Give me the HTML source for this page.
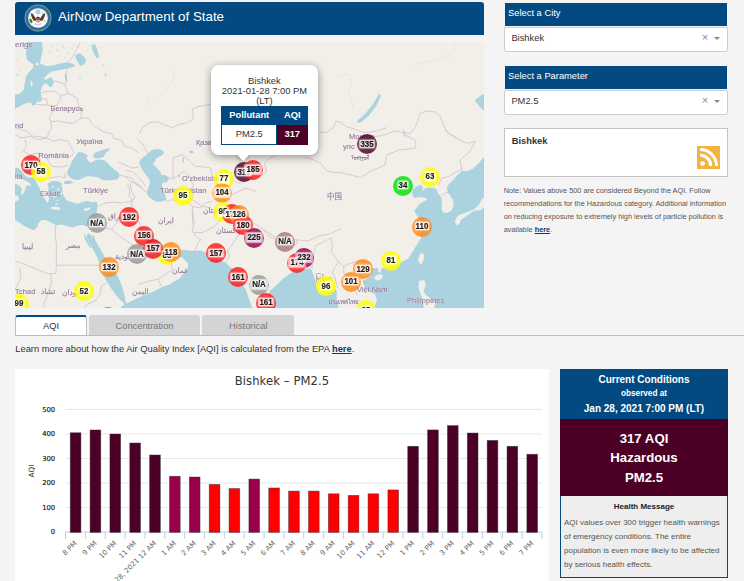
<!DOCTYPE html><html><head><meta charset="utf-8"><title>AirNow Department of State</title><style>

*{box-sizing:border-box}
html,body{margin:0;padding:0}
body{width:744px;height:581px;overflow:hidden;background:#f4f4f4;font-family:"Liberation Sans",Arial,sans-serif;position:relative;color:#333}
.abs{position:absolute}
.hdr{left:15px;top:2px;width:469px;height:33px;background:#034a82;border-radius:3px 3px 0 0;color:#fff;font-size:13.33px;line-height:33px}
.hdr span{position:absolute;left:43.1px;top:-1.9px;white-space:nowrap}
.seal{position:absolute;left:8.85px;top:1.85px}
.map{left:15px;top:42px;width:469px;height:266px;overflow:hidden;background:#f2efe9}
.mapsvg{position:absolute;left:0;top:0}
.mk{position:absolute;width:20px;height:20px;border-radius:50%;opacity:.82}
.mk i{position:absolute;left:1.6px;top:1.6px;right:1.6px;bottom:1.6px;border-radius:50%;}
.ml{position:absolute;width:20px;height:20px;opacity:.92}
.ml b{position:absolute;left:-10px;right:-10px;top:4.6px;text-align:center;font-size:9.2px;line-height:10px;color:#111;font-weight:bold;transform:scaleX(.86)}
.ml b u{text-decoration:none;display:inline-block;height:8.2px;line-height:8.6px;margin-top:1px;padding:0 .9px;background:rgba(255,255,255,.85);box-shadow:0 0 1.5px .5px rgba(255,255,255,.75);border-radius:1px;-webkit-text-stroke:.18px #111;
 text-shadow:0 0 1px #fff,0 0 1.5px #fff,0 0 2px #fff}
.pop{left:195.7px;top:23.3px;width:107.4px;height:89.5px;background:#fff;border-radius:8px;box-shadow:0 2px 9px rgba(0,0,0,.4);text-align:center;font-size:9.33px;line-height:10.25px;color:#333}
.tip{left:221.4px;top:112.7px;width:13.6px;height:13.6px;overflow:hidden}
.tip i{position:absolute;left:1.6px;top:-5.6px;width:10.4px;height:10.4px;background:#fff;transform:rotate(45deg);box-shadow:0 1px 5px rgba(0,0,0,.3)}
.pt{position:absolute;left:10.3px;top:40.7px;width:87px;height:38px;border-collapse:collapse;font-size:9.33px;line-height:10px}
.pt th{background:#034a82;color:#fff;font-weight:bold;height:18.4px;padding:0 0 1.6px;border:1px solid #034a82}
.pt td{height:19.2px;padding:0;border:1px solid #034a82;background:#fff}
.pt td.v{background:#4c0026;color:#fff;font-weight:bold;border-color:#4c0026}
.ph{left:504.5px;width:222.8px;height:23px;background:#034a82;color:#fff;font-size:9.33px;line-height:21.8px;padding-left:3.6px;white-space:nowrap}
.sel{left:504.4px;width:223.4px;height:24.5px;background:#fff;border:1px solid #ccc;border-radius:3px;font-size:9.33px;line-height:20.8px;padding-left:6px;color:#333}
.sel .x{position:absolute;right:18.6px;top:-1.4px;color:#7f8a99;font-size:11px}
.sel .a{position:absolute;right:7px;top:8.8px;width:0;height:0;border-left:3.3px solid transparent;border-right:3.3px solid transparent;border-top:3.3px solid #888}
.rss{left:504.2px;top:128px;width:223.5px;height:48.5px;background:#fff;border:1px solid #c4c4c4;font-weight:bold;font-size:9.33px;color:#333}
.rss span{position:absolute;left:6.5px;top:7px}
.note{left:503.7px;top:184px;width:232px;font-size:7.33px;line-height:13px;color:#555;white-space:nowrap}
.note b{color:#123a6a;text-decoration:underline}
.tabline{left:15px;top:335px;width:729px;height:1px;background:#bdbdbd}
.tab{top:315px;height:20.5px;font-size:9.33px;line-height:23.4px;text-align:center;color:#777;background:#d4d4d4;border-radius:3px 3px 0 0}
.tab.on{background:#fff;color:#333;border:1px solid #bdbdbd;border-top:2px solid #034a82;border-bottom:0;line-height:19.6px}
.learn{left:15.3px;top:342.5px;font-size:9.33px;line-height:12px;white-space:nowrap;color:#333}
.learn b{color:#123a6a;text-decoration:underline}
.cc{left:560px;top:369px;width:168px;text-align:center;color:#fff;font-weight:bold}
.cc1{background:#034a82;height:49.6px;font-size:10px;line-height:14.4px;padding-top:3.9px}
.cc1 small{font-size:8.2px;display:block;line-height:14.4px}
.cc2{background:#4c0026;height:77px;font-size:13.2px;line-height:19.2px;padding-top:10.5px}
.cc3{background:#eee;border:1px solid #034a82;border-top:0;height:82.2px;color:#333;font-size:8px;line-height:14px;text-align:left;padding:0 3px;font-weight:normal;white-space:nowrap}
.cc3 h6{margin:0;text-align:center;font-size:8px;line-height:13px;padding-top:4.6px;padding-bottom:3px;color:#222}
.cc3 p{margin:0;color:#555}

</style></head><body>
<div class="abs hdr"><svg class="seal" width="28" height="28" viewBox="0 0 28 28">
<circle cx="14" cy="14" r="13.4" fill="#a9b45e"/>
<circle cx="14" cy="14" r="12.7" fill="#2b6cb3"/>
<circle cx="14" cy="14" r="10.1" fill="#9fb8a8"/>
<circle cx="14" cy="14" r="9.6" fill="#fbfbfb"/>
<circle cx="14" cy="7.8" r="2.6" fill="#a8cfe6"/>
<path d="M6.6 9.3 L8.9 9.9 L11.1 13.4 L12.8 15.6 L11.4 17 L9.3 16.3 L7.8 13.5 Z" fill="#5e3a14"/>
<path d="M21.4 9.3 L19.1 9.9 L16.9 13.4 L15.2 15.6 L16.6 17 L18.7 16.3 L20.2 13.5 Z" fill="#5e3a14"/>
<path d="M8.6 9.4 L9.2 7.9 L9.9 9.8 Z M19.4 9.4 L18.8 7.9 L18.1 9.8 Z" fill="#c9b23a"/>
<ellipse cx="14" cy="14.1" rx="1.8" ry="1.3" fill="#3a2a18"/>
<path d="M12.2 14.4 h3.7 v3 q-1.85 2.6 -3.7 0 Z" fill="#f08a8a"/>
<path d="M12.2 14.4 h3.7 v1.4 h-3.7 Z" fill="#2f5fa8"/>
<ellipse cx="6.9" cy="16.9" rx="1.3" ry="2.4" transform="rotate(-25 6.9 16.9)" fill="#3f7f3a"/>
<path d="M19.6 15.6 l2.6 1.6 l-.5 .8 l-2.7 -1.4 Z" fill="#b5b5b5"/>
<path d="M11 19 q3 2 6 0 l.6 1.6 q-3.6 1.8 -7.2 0 Z" fill="#cfcfcf"/>
</svg><span>AirNow Department of State</span></div>
<div class="abs map">
<svg class="mapsvg" width="469" height="266" viewBox="0 0 469 266">
<rect width="469" height="266" fill="#f2efe9"/>
<g filter="url(#bl)">
<polygon points="0,125.5 3,125.8 6,128.5 9,132.5 14,136.5 19,139.5 19,150 0,150" fill="#aad3df" />
<polygon points="11.88,0 26.88,0 27.75,6.5 26.88,12.75 25.62,17.75 25,21.5 31.25,24 37.5,23.38 45,21.5 52.5,20.25 57.5,21.5 60.62,24 55,25.88 50,27.12 42.5,28.38 36.25,29.62 33.75,31.5 30,35.25 31.25,36.5 36.25,35.25 38.75,39 37.5,44 35,45.25 32.5,42.12 29.38,41.5 26.88,45.25 25.62,49 26.25,54 26.88,59 21.25,60.25 20.62,62.75 17.5,63.38 15.62,60.25 10,61.5 5,64 0,67.12 0,52.75 5,51.5 8.75,47.75 10,40.25 10.62,35.25 13.75,30.25 17.5,26.5 18.75,22.75 15,20.25 11.88,17.75 11,11.5 11.88,5.25" fill="#aad3df" />
<polygon points="60.62,12.75 65,10.88 69.38,15.25 71.25,19 68.75,22.75 65,24 63.12,20.25 60.62,16.5" fill="#aad3df" />
<polygon points="76.88,2.75 80,2.12 82.5,9 84.38,15.25 81.88,16.5 78.75,11.5 76.88,6.5" fill="#aad3df" />
<polygon points="49.75,32.12 51.25,31.75 52.25,39 50.62,39.25" fill="#aad3df" />
<polygon points="63.75,109.88 67.5,110.5 71.25,112.38 73.12,113.62 71.25,116.12 73.12,118.62 75.62,121.12 80,118.62 83.75,117.38 88.75,118 92.5,121.12 96.25,124.88 100,128 103.75,131.12 104.38,134.88 101.88,137.38 97.5,138 92.5,138.62 87.5,138 83.75,135.5 80,134.88 76.25,134.25 72.5,134.25 68.75,135.5 65,137.38 61.25,138 56.88,136.75 53.75,134.25 51.88,131.12 53.12,127.38 55.62,123 56.88,119.25 60,114.88 61.88,111.75" fill="#aad3df" />
<polygon points="78.12,112.38 81.25,109.88 86.25,108.62 91.25,106.75 95,106.12 93.75,108.62 90,111.75 88.75,114.88 85,116.12 81.25,116.75 78.75,115.5" fill="#aad3df" />
<polygon points="48.75,139.88 52.5,138.62 56.88,139.25 58.12,141.12 53.75,142 49.38,142" fill="#aad3df" />
<polygon points="0,135.5 17.5,135.5 20,138 22,141.75 24.25,145.5 25.88,149.88 28.5,154.88 30.62,158.62 32.75,161.12 34,158 33.5,153 32.75,149.25 33.75,145.5 32.25,142.75 34,140.75 35.62,139.75 38.12,139 42.5,139.25 45.25,140.25 46.88,141.75 46.5,144.25 47.75,146.75 47.25,149.88 48.5,153 50.25,156.75 53.75,159.25 58.12,160.5 62.5,161.75 67.5,159.88 72.5,159 77.5,160.5 81.25,159.5 82.75,163 81.88,169.25 80.25,175.5 77.5,180.5 75,183.75 72.5,184.5 67.5,183 62.5,183.75 57.5,185.5 52.5,184.25 46.25,182.38 41.25,183.25 36.25,180.75 31.25,178.25 26.88,178 23.5,181.12 22,185.5 18.75,188.25 13.75,186.25 7.5,183 3.75,180 0,178" fill="#aad3df" />
<polygon points="71.25,196 75,202.25 78.75,208.5 81.88,214.75 84.38,221 87.5,232.25 91.25,238.5 95,244.75 99.38,251 104.38,257.25 108.75,261 110,263.5 111.25,262.25 110.62,259.75 110,256 108.75,249.75 106.25,242.25 102.5,233.5 97.5,226 92.5,218.5 89.38,214.75 86.25,208.5 81.88,201 78.12,196 76.25,193.5 73.75,191 72.25,192.25" fill="#aad3df" />
<polygon points="77.75,193 79,196.75 78.5,200.5 77.25,198" fill="#aad3df" />
<polygon points="69,191.12 70.62,194.25 73.75,200.5 76.25,205.5 75,206.12 71.88,201.12 69.38,195.5" fill="#aad3df" />
<polygon points="136.88,108 141.25,107 146.25,107.38 149,109.88 147.5,113 143.75,114.88 140.62,116.75 140,119.88 137.5,121.12 140,124.25 143.12,127.38 145.62,129.88 146.25,133 150,133 153.12,135.5 153.75,138.62 151.25,140.5 148.12,140.5 146.88,143 147.5,146.75 149.38,150.5 150.62,154.25 151.25,158 147.5,159.25 142.5,159.88 138.12,158 134.38,155.5 131.88,151.75 132.5,147.38 134.38,143 135,139.25 133.12,135.5 130,131.75 127.5,128 125.62,124.25 124,120.5 125.62,117.38 128.75,114.88 132.5,111.75" fill="#aad3df" />
<polygon points="174,109.25 176.88,108.62 179,110.25 176.88,111.5 174.38,110.75" fill="#aad3df" />
<polygon points="167.75,115.5 169,115.25 168.75,120.5 167.25,120.75" fill="#aad3df" />
<polygon points="163.12,133.62 164.75,133 165.25,135.25 163.5,135.75" fill="#aad3df" />
<polygon points="110,262 115,259.8 121,256.8 130,252.8 139.9,248.9 146.8,244.9 154.8,242.4 157.8,239.9 163.8,236.9 166.7,233.9 170.7,229 173.2,224 172.7,221 169.5,217.5 165.5,214.5 164,209.5 166,207.8 172,208.3 179,209 185.7,208.5 190.7,210.5 193,214.5 203.75,218.6 208,219.5 210.7,220.7 214,224 217.3,226.5 222,234 226.5,241 230.7,247.3 234,257.3 237.3,266 105,266" fill="#aad3df" />
<polygon points="123.75,185.25 130,186.5 136.25,194 143.75,200.25 152.5,205.25 162.5,206.5 168,209.5 166.25,215.25 160,216.5 153.75,220.25 146.25,219 141.25,211.5 136.25,206.5 130,197.75 125,191.5" fill="#aad3df" />
<polygon points="323.75,266 322.5,259.75 321.5,254.75 321.9,249.75 320,246.6 317.5,248.5 313.75,251 308.75,252.9 303.75,251 301.9,246 300,237.25 298.1,232.25 296.9,228.5 295,226 290,227.25 282.5,228.75 278,229.75 272.5,233.5 267.5,237.25 262.5,242.25 258.75,245.4 255,248.5 253.1,252.25 251.9,258.5 252.5,266" fill="#aad3df" />
<polygon points="469,114.9 464.25,120.5 458,126.75 451.75,129.25 446.75,128.6 443,132.4 439.25,136.75 434.25,141.75 431.75,145.5 433,150.5 435.5,154.25 438,158 438.6,163 436.75,168.25 432,170.9 428,170.6 426.6,166.75 427,161.1 426.5,156.1 424.5,153 422.5,150.5 421.3,147 415.5,145.5 410.75,146.1 407,149.25 408,145.5 406.1,142.75 401.75,144.25 398.6,146.75 396.75,151.75 399.25,156.1 405.5,154.9 411.1,156.1 411.75,158 408,159.9 404.9,161.75 401.75,165.5 399.9,168 399,169 403,175 407,181.5 405.75,196.5 399.5,206.5 393.25,216.5 388.75,219.1 385,221 368.75,226 366,227.25 365.6,230.4 363.1,229.75 362.75,226 358.75,226 356.9,229.1 355.6,233.5 351.25,237.25 347.5,239.1 348.75,243.5 352.5,248.5 360,252.25 361.9,258.5 360,263.5 359.4,266 469,266" fill="#aad3df" />
<polygon points="459.5,58.5 465.75,53.5 469,52 469,68.5 466.5,67 463.25,62.75" fill="#aad3df" />
<polygon points="364,52 366,53.5 361,64.5 353.5,74 344.75,81 341.5,79.5 351,71 358.5,61.5" fill="#aad3df" />
<polygon points="0,133 4,135.5 8,137.5 12,139.5 15.5,141.8 16,144.3 13,143.3 10.8,144.5 10.2,148 8.7,151 6.6,153.2 6,150.2 7,147 5,144.2 2,142.2 0,141.7" fill="#f2efe9" />
<polygon points="0,153 3,154 4.2,157 1.5,159.6 0,159.2" fill="#f2efe9" />
<polygon points="35.62,165.25 40.62,164.5 45.62,165.75 45,168 40,167.75 36,167" fill="#f2efe9" />
<polygon points="68.75,167 73.12,165.75 75.62,165.25 75,167.38 71.25,169 69,168.62" fill="#f2efe9" />
<polygon points="360,234 364,232.3 368,233 367,236.5 363,238.5 359.5,237" fill="#f2efe9" />
<polygon points="406.9,210.4 409.4,212.9 408.75,217.25 406.25,222.9 404.4,221 403.1,217.25 404.4,212.9" fill="#f2efe9" />
<polygon points="404,238.8 409.6,238.2 410.6,243.5 408.6,248.5 410.2,252.25 413.5,254.75 418,258.5 420.5,262 419,266 409,266 407.5,261 407.5,256 405,251 403.6,246" fill="#f2efe9" />
<polygon points="440.8,177 443,173.6 448,171.6 453,169.8 459.25,167.2 464.25,162.2 466.75,156.8 469,155.5 469,165.5 465.5,168.2 460.5,168.6 456.75,170.2 453,173 449.25,175.5 445.75,178 444.5,182 442,183.5 439.8,180" fill="#f2efe9" />
<polygon points="15.5,39.62 17,38.75 17.75,42.12 16.75,45 15.75,43.38" fill="#f2efe9" />
<polygon points="20.62,21.5 23.12,20.5 24,22.5 21.5,23.5" fill="#f2efe9" />
<polygon points="29,35.5 32.75,34.25 33.5,36.5 30,38" fill="#f2efe9" />
<ellipse cx="39.19" cy="154.61" rx="2.09677" ry="0.967742" fill="#f2efe9" opacity=".8"/>
<ellipse cx="43.23" cy="147.35" rx="1.20968" ry="1.6129" fill="#f2efe9" opacity=".8"/>
<ellipse cx="46.61" cy="151.39" rx="0.725806" ry="1.45161" fill="#f2efe9" opacity=".8"/>
<ellipse cx="41.61" cy="162.27" rx="1.77419" ry="0.725806" fill="#f2efe9" opacity=".8"/>
<ellipse cx="37.98" cy="144.53" rx="0.806452" ry="1.6129" fill="#f2efe9" opacity=".8"/>
<ellipse cx="42.82" cy="158.24" rx="1.12903" ry="0.806452" fill="#f2efe9" opacity=".8"/>
<ellipse cx="39.19" cy="149.77" rx="0.967742" ry="0.806452" fill="#f2efe9" opacity=".8"/>
<ellipse cx="37.5" cy="4" rx="1.125" ry="0.625" fill="#aad3df" opacity=".75"/>
<ellipse cx="42.5" cy="8.38" rx="0.875" ry="1.25" fill="#aad3df" opacity=".75"/>
<ellipse cx="48.12" cy="4.62" rx="0.75" ry="1.125" fill="#aad3df" opacity=".75"/>
<ellipse cx="53.12" cy="10.88" rx="1" ry="0.625" fill="#aad3df" opacity=".75"/>
<ellipse cx="56.88" cy="5.88" rx="0.625" ry="1" fill="#aad3df" opacity=".75"/>
<ellipse cx="43.75" cy="14" rx="1.125" ry="0.5" fill="#aad3df" opacity=".75"/>
<ellipse cx="34.38" cy="9.62" rx="0.625" ry="0.875" fill="#aad3df" opacity=".75"/>
<ellipse cx="50" cy="15.25" rx="0.75" ry="0.5" fill="#aad3df" opacity=".75"/>
<ellipse cx="41.25" cy="1.5" rx="0.75" ry="0.5" fill="#aad3df" opacity=".75"/>
<ellipse cx="58.75" cy="2.75" rx="0.625" ry="0.75" fill="#aad3df" opacity=".75"/>
<ellipse cx="2.5" cy="32.75" rx="0.75" ry="1.5" fill="#aad3df" opacity=".75"/>
<ellipse cx="5" cy="27.75" rx="0.625" ry="1" fill="#aad3df" opacity=".75"/>
<ellipse cx="1.88" cy="17.75" rx="0.625" ry="0.75" fill="#aad3df" opacity=".75"/>
<ellipse cx="7.5" cy="10.25" rx="0.5" ry="0.75" fill="#aad3df" opacity=".75"/>
<ellipse cx="88.75" cy="22.75" rx="1.25" ry="0.625" fill="#aad3df" opacity=".75"/>
<ellipse cx="90.62" cy="32.75" rx="1" ry="1.75" fill="#aad3df" opacity=".75"/>
<ellipse cx="65" cy="36.5" rx="1.125" ry="0.75" fill="#aad3df" opacity=".75"/>
<ellipse cx="86.25" cy="5.25" rx="0.625" ry="0.625" fill="#aad3df" opacity=".75"/>
<ellipse cx="71.88" cy="8.38" rx="0.625" ry="0.5" fill="#aad3df" opacity=".75"/>
<ellipse cx="75" cy="4" rx="0.5" ry="0.75" fill="#aad3df" opacity=".75"/>
</g>
<g fill="none" stroke="#c4a3c4" stroke-width=".75" stroke-linejoin="round" opacity=".7">
<polyline points="65.33,0.33 61.67,7.33 57.5,14.83 53.33,19.83"/>
<polyline points="52,27.33 50.83,32.33 51.67,39 50,42.67 51.33,47.33 53,51.5"/>
<polyline points="39.17,39 44.17,39.83 50,42.67"/>
<polyline points="26.67,50.67 33.33,49 40.83,49.83 45.83,54 53,51.5"/>
<polyline points="45.83,54 45,58.17 42.5,62.33 40,64"/>
<polyline points="21.67,62.33 31.67,63.17 40,64"/>
<polyline points="26.67,56.5 31.67,57.33 32.5,63.17"/>
<polyline points="53,51.5 58.33,54 62.5,56.5 63.33,63.17 66.67,69 65.83,76.5"/>
<polyline points="35.83,79.83 43.33,79 51.67,80.67 58.33,81.5 62.5,78.17 65.83,76.5"/>
<polyline points="40,64 35.83,72.33 34.17,76.5 35.83,79.83 36.67,85.67 33.33,92.33 31.67,95.83"/>
<polyline points="65.83,76.5 73.33,75.67 76.67,81.5 81.67,85.67 88.33,89.83 96.67,91.5 98.33,95.83"/>
<polyline points="0,85.67 6.67,87.33 13.33,89.83 16.67,94 25,94.83 31.67,95.83"/>
<polyline points="98.33,96 106.67,98.5 110,104.33 116.67,106 123.83,111"/>
<polyline points="31.67,96 38.33,99.33 45,97.67 53.33,99.33 56.67,106 59.17,111 55,115.17"/>
<polyline points="0,92.67 6.67,96 15,94.33 23.33,97.67 31.67,96"/>
<polyline points="10,97.67 11.67,104.33 8.33,109.33 15,112.67 23.33,111 30,112.67"/>
<polyline points="30,112.67 36.67,124.33 45,125.17 53.33,123.5"/>
<polyline points="23.33,111 25,119.33 21.67,126"/>
<polyline points="35.83,136 43.33,134.33 50,136 50,131"/>
<polyline points="25,139.33 31.67,136 35.83,136"/>
<polyline points="104.17,132.67 110,134.33 116.67,136 120,141 123.83,142.67"/>
<polyline points="115,141 116.67,149.33 120,156 115,159.33 106.67,161 98.33,160.17 90,161 83.33,164.33"/>
<polyline points="103.33,120.17 110,122.67 116.67,126 123.83,125.17"/>
<polyline points="124,92.33 127.33,85.67 134,80.67 142.33,79.83 150.67,83.17 157.33,85.67 164,82.33 172.33,80.67 177.33,77.33 178.17,72.33 177.33,67.33 182.33,64.83 190.67,63.17 195.67,62.33"/>
<polyline points="304.67,89.83 311.33,90.67 318,85.67 321.33,79 326.33,80.67 331.33,84.83 338,86.5 344.67,89 351.33,90.67 361.33,89 371.83,85.67"/>
<polyline points="355,94.83 365,94 373.33,91.5 380,89 388.33,90.33 395,91.5 400,85.67 403.33,77.33 405,71.5 411.67,69 420,69.83 425,74 428.33,82.33 431.67,89.83 438.33,94 441.67,95.83"/>
<polyline points="388.33,90.33 390,95.83"/>
<polyline points="149,134.33 154,136 158.17,136.83 158.17,116 167.33,112.67 174,118.5 180.67,124.33 190.67,125.17 195.67,126 197.33,134.33"/>
<polyline points="158.17,136.83 164,132.67 169,129.33 174,134.33 178.17,142.67 177.33,157.67 187.33,164.33 195.67,166"/>
<polyline points="217.33,136 222.33,141 230.67,139.33 240.67,136 247.83,132.67"/>
<polyline points="217.33,152.67 224,149.33 230.67,146 240.67,149.33"/>
<polyline points="151.5,159.33 157.33,157.67 164,160.17 172.33,159.33 177.33,164.33 177.33,172.67 178.17,182.83"/>
<polyline points="177.33,164.33 185.67,166 190.67,161 197.33,159.33"/>
<polyline points="289.67,115.17 298,117.67 306.33,121.83 311.33,128.5 318,130.17 328,131 338,133.5 344.67,135.17"/>
<polyline points="248,133.5 251.33,129.33 249.67,121 254.67,116 259.67,114.33"/>
<polyline points="40.83,183.17 40,190.67 41.33,202.33 41.33,223.17 40.83,231.5 35.83,231.5 35.83,232.33"/>
<polyline points="41.33,223.17 66.67,223.17 85,223.17"/>
<polyline points="0,219 10,222.33 23.33,228.17 35.83,232.33 36.67,240.67 33.33,249 30.83,257.33 28.33,262.33 30,265.83"/>
<polyline points="5,225.67 5.83,235.67 1.67,244 0,247.33"/>
<polyline points="91.67,240.67 86.67,244 85,252.33 80,259 71.67,262.33 70,265.83"/>
<polyline points="78,192.33 80,199"/>
<polyline points="84.17,189 90,185.67 96.67,187.33 103.33,179 108.33,182.33"/>
<polyline points="96.67,187.33 106.67,195.67 116.67,202.33 123.83,207.33"/>
<polyline points="179.83,209 182.33,202.33 185.67,197.33 180.67,194 177.33,189 179,179 177.33,169"/>
<polyline points="179,190.67 187.33,190.67 194,187.33 199,184.83 204,179 210.67,175.67"/>
<polyline points="210.67,220.67 214.83,214 212.33,209 217.33,202.33 220.67,197.33 224,192.33"/>
<polyline points="155.67,219 157.33,227.33 145.67,235.67 143.17,237.33 146.5,244"/>
<polyline points="124,242.33 134,239 143.17,237.33"/>
<polyline points="124,179 127.33,189 134,194"/>
<polyline points="300.62,203.5 299.38,208.5 296.88,214.75 298.12,221 296.88,226"/>
<polyline points="300.62,203.5 306.25,201 311.25,198.5 316.25,196"/>
<polyline points="316.25,196 317.5,203.5 316.25,209.75 320,214.75 323.75,219.75 320,224.75 317.5,231 320,236 322.5,246"/>
<polyline points="323.75,219.75 328.75,224.75 332.5,222.25 337.5,221 342.5,228.5 347.5,236 351.25,242.25"/>
<polyline points="328.75,224.75 328.75,231 333.75,233.5 340,237.25 343.75,242.25 340,248.5 342.5,253.5"/>
<polyline points="337.5,221 343.75,218.5 350,219.75 356.25,221"/>
<polyline points="282.5,208.5 286.25,206 292.5,207.25 295,212.25 294.38,218.5 296.88,226"/>
<polyline points="282.5,208.5 281.88,216 283.75,223.5 285,227.25"/>
<polyline points="226,174 236,179 248.5,187.75 261,195.25 271,197.75 281,197.75 293.5,199 303.5,194 316,191.5 326,186.5"/>
<polyline points="248.5,187.75 253.5,194 266,200.25 281,202.75 282.25,197.75"/>
<polyline points="345,136.33 355,129.67 370,123 371.67,113 383.33,108 400,106.33 400.83,102.17 400,98 390,93 388.33,88"/>
<polyline points="430,88 438.33,94.67 451.67,101.33 460,99.67 455,109.67 445,118 446.67,128"/>
<polyline points="423.33,143 426.67,136.33 433.33,134.67 440,130.5 445,128 448.33,125.5"/>
<polyline points="426.67,153 431.67,150.5 435.83,150"/>
<polyline points="123.12,98 127.5,101.75 130.62,107.38 132.5,111.12"/>
<polyline points="110,128 117.5,129.88 122.5,134.25 127.5,139.25 130.62,144.88"/>
<polyline points="110,134.25 115,139.25 118.75,140.5 122.5,143 127.5,145.5"/>
<polyline points="112.5,141.75 115,148 113.75,154.25 117.5,158 116.25,163 121.25,170"/>
<polyline points="122.5,143 128.75,148 132.25,150.5"/>
</g>
<g fill="none" stroke="#aad3df" stroke-width=".7" stroke-linejoin="round" opacity=".35">
<polyline points="323,34.83 329.67,32.33 334.67,32.33 336.33,42.33 333,52.33 336.33,55.67 338,65.67"/>
<polyline points="439.17,0.67 440.83,5.67 436.67,12.33 426.67,16.5 413.33,19.83 403.33,21.5 396.67,25.67"/>
<polyline points="129.83,65.67 134,56.5 138.17,55.67"/>
<polyline points="145.67,53.17 152.33,45.67 157.33,40.67 159.83,29.83"/>
</g>
<g font-family="'Liberation Sans','DejaVu Sans','Noto Sans CJK SC',sans-serif" opacity=".8" style="filter:drop-shadow(0 0 .45px #f6f3ee) drop-shadow(0 0 .45px #f6f3ee) drop-shadow(0 0 .6px #f6f3ee)">
<text x="0" y="5.1" font-size="7.752" letter-spacing=".12" fill="#80628c" stroke="#80628c" stroke-width=".18">erige</text>
<text x="35.5" y="68.5" font-size="7.446" fill="#80628c" stroke="#80628c" stroke-width=".18">Беларусь</text>
<text x="61.5" y="101.5" font-size="7.446" fill="#80628c" stroke="#80628c" stroke-width=".18">Україна</text>
<text x="23.5" y="115.5" font-size="7.446" letter-spacing=".12" fill="#80628c" stroke="#80628c" stroke-width=".18">România</text>
<text x="0" y="85.5" font-size="7.446" letter-spacing=".12" fill="#80628c" stroke="#80628c" stroke-width=".18">nd</text>
<text x="25" y="154" font-size="7.446" fill="#80628c" stroke="#80628c" stroke-width=".18">Ελλάς</text>
<text x="68" y="150.5" font-size="7.446" letter-spacing=".12" fill="#80628c" stroke="#80628c" stroke-width=".18">Türkiye</text>
<text x="145" y="150.5" font-size="7.446" letter-spacing=".12" fill="#80628c" stroke="#80628c" stroke-width=".18">Türkmenistan</text>
<text x="167" y="139" font-size="7.446" letter-spacing=".12" fill="#80628c" stroke="#80628c" stroke-width=".18">O'zbekiston</text>
<text x="181" y="102.5" font-size="7.446" fill="#80628c" stroke="#80628c" stroke-width=".18">Қазақстан</text>
<text x="7" y="207" font-size="7.446" fill="#80628c" stroke="#80628c" stroke-width=".18">ليبيا</text>
<text x="51" y="205.5" font-size="7.446" fill="#80628c" stroke="#80628c" stroke-width=".18">مصر</text>
<text x="0" y="251.5" font-size="7.446" letter-spacing=".12" fill="#80628c" stroke="#80628c" stroke-width=".18">Tchad</text>
<text x="26" y="251.5" font-size="7.446" fill="#80628c" stroke="#80628c" stroke-width=".18">تشاد</text>
<text x="47" y="252.5" font-size="7.446" fill="#80628c" stroke="#80628c" stroke-width=".18">السودان</text>
<text x="117" y="251.5" font-size="7.446" fill="#80628c" stroke="#80628c" stroke-width=".18">اليمن</text>
<text x="157" y="230.5" font-size="7.446" fill="#80628c" stroke="#80628c" stroke-width=".18">عمان</text>
<text x="100" y="216.5" font-size="7.446" fill="#80628c" stroke="#80628c" stroke-width=".18">السعودية</text>
<text x="143" y="180.5" font-size="7.446" fill="#80628c" stroke="#80628c" stroke-width=".18">ایران</text>
<text x="93" y="176.5" font-size="7.446" fill="#80628c" stroke="#80628c" stroke-width=".18">العراق</text>
<text x="188" y="170.5" font-size="7.446" fill="#80628c" stroke="#80628c" stroke-width=".18">افغانستان</text>
<text x="201" y="190.5" font-size="7.446" fill="#80628c" stroke="#80628c" stroke-width=".18">پاکستان</text>
<text x="312" y="157" font-size="7.446" fill="#80628c" stroke="#80628c" stroke-width=".18">中国</text>
<text x="334" y="96.5" font-size="7.446" fill="#80628c" stroke="#80628c" stroke-width=".18">Монгол</text>
<text x="328" y="106.5" font-size="7.446" fill="#80628c" stroke="#80628c" stroke-width=".18">улс</text>
<text x="336" y="117.5" font-size="6.12" fill="#80628c" stroke="#80628c" stroke-width=".18">ᠮᠣᠩᠭᠣᠯ</text>
<text x="342" y="250.3" font-size="7.446" fill="#80628c" stroke="#80628c" stroke-width=".18">Việt Nam</text>
<text x="313" y="262" font-size="6.324" fill="#80628c" stroke="#80628c" stroke-width=".18">ประเทศไทย</text>
<text x="392" y="260.5" font-size="7.446" letter-spacing=".12" fill="#80628c" stroke="#80628c" stroke-width=".18">Philippines</text>
<text x="301" y="237.5" font-size="7.446" fill="#80628c" stroke="#80628c" stroke-width=".18">မြန်မာ</text>
<text x="0" y="136.5" font-size="7.446" letter-spacing=".12" fill="#80628c" stroke="#80628c" stroke-width=".18">lia</text>
</g>
<defs><filter id="bl" x="-5%" y="-5%" width="110%" height="110%"><feGaussianBlur stdDeviation="0.45"/></filter></defs>
</svg>
<div class="mk" style="left:5.5px;top:113.3px;background:#ff1a1a"><i style="background:#ff1a1a"></i></div>
<div class="mk" style="left:16.3px;top:119.8px;background:#ffff00"><i style="background:#ffff00"></i></div>
<div class="mk" style="left:-6.2px;top:251.5px;background:#ffff00"><i style="background:#ffff00"></i></div>
<div class="mk" style="left:82.5px;top:265px;background:#00e400"><i style="background:#00e400"></i></div>
<div class="mk" style="left:59.4px;top:239.1px;background:#ffff00"><i style="background:#ffff00"></i></div>
<div class="mk" style="left:84.4px;top:215px;background:#ff8a1a"><i style="background:#ff8a1a"></i></div>
<div class="mk" style="left:72px;top:171px;background:#999999"><i style="background:#999999"></i></div>
<div class="mk" style="left:104.3px;top:165.3px;background:#ff1a1a"><i style="background:#ff1a1a"></i></div>
<div class="mk" style="left:142.1px;top:203.2px;background:#ffff00"><i style="background:#ffff00"></i></div>
<div class="mk" style="left:145.6px;top:200.1px;background:#ff8a1a"><i style="background:#ff8a1a"></i></div>
<div class="mk" style="left:112px;top:202.3px;background:#999999"><i style="background:#999999"></i></div>
<div class="mk" style="left:118.6px;top:183.6px;background:#ff1a1a"><i style="background:#ff1a1a"></i></div>
<div class="mk" style="left:127.8px;top:196.5px;background:#e8141e"><i style="background:#e8141e"></i></div>
<div class="mk" style="left:157.5px;top:143.6px;background:#ffff00"><i style="background:#ffff00"></i></div>
<div class="mk" style="left:198.8px;top:126.9px;background:#ffff00"><i style="background:#ffff00"></i></div>
<div class="mk" style="left:196.9px;top:140.8px;background:#ff8a1a"><i style="background:#ff8a1a"></i></div>
<div class="mk" style="left:218.6px;top:120.2px;background:#4c0026"><i style="background:#4c0026"></i></div>
<div class="mk" style="left:228.4px;top:117.8px;background:#ff1a1a"><i style="background:#ff1a1a"></i></div>
<div class="mk" style="left:198.1px;top:159.8px;background:#ffff00"><i style="background:#ffff00"></i></div>
<div class="mk" style="left:206.8px;top:162.3px;background:#ff1a1a"><i style="background:#ff1a1a"></i></div>
<div class="mk" style="left:214px;top:162.7px;background:#ff8a1a"><i style="background:#ff8a1a"></i></div>
<div class="mk" style="left:218px;top:173.3px;background:#ff1a1a"><i style="background:#ff1a1a"></i></div>
<div class="mk" style="left:228.5px;top:185.8px;background:#99004c"><i style="background:#99004c"></i></div>
<div class="mk" style="left:259.8px;top:189.7px;background:#a87878"><i style="background:#a87878"></i></div>
<div class="mk" style="left:190.6px;top:201.2px;background:#ff1a1a"><i style="background:#ff1a1a"></i></div>
<div class="mk" style="left:212.8px;top:225.3px;background:#ff1a1a"><i style="background:#ff1a1a"></i></div>
<div class="mk" style="left:233.7px;top:232.9px;background:#999999"><i style="background:#999999"></i></div>
<div class="mk" style="left:240.8px;top:250.5px;background:#ff1a1a"><i style="background:#ff1a1a"></i></div>
<div class="mk" style="left:271.5px;top:210.8px;background:#ff1a1a"><i style="background:#ff1a1a"></i></div>
<div class="mk" style="left:279px;top:205.8px;background:#99004c"><i style="background:#99004c"></i></div>
<div class="mk" style="left:301px;top:234px;background:#ffff00"><i style="background:#ffff00"></i></div>
<div class="mk" style="left:326px;top:229.5px;background:#ff8a1a"><i style="background:#ff8a1a"></i></div>
<div class="mk" style="left:338px;top:217.3px;background:#ff8a1a"><i style="background:#ff8a1a"></i></div>
<div class="mk" style="left:341px;top:258.2px;background:#ffff00"><i style="background:#ffff00"></i></div>
<div class="mk" style="left:366px;top:208.5px;background:#ffff00"><i style="background:#ffff00"></i></div>
<div class="mk" style="left:397px;top:174.5px;background:#ff8a1a"><i style="background:#ff8a1a"></i></div>
<div class="mk" style="left:378.3px;top:133.7px;background:#00e400"><i style="background:#00e400"></i></div>
<div class="mk" style="left:405.1px;top:124.8px;background:#ffff00"><i style="background:#ffff00"></i></div>
<div class="mk" style="left:342.3px;top:92.3px;background:#4c0026"><i style="background:#4c0026"></i></div>
<div class="ml" style="left:5.5px;top:113.3px"><b><u>170</u></b></div>
<div class="ml" style="left:16.3px;top:119.8px"><b><u>58</u></b></div>
<div class="ml" style="left:-6.2px;top:251.5px"><b><u>99</u></b></div>

<div class="ml" style="left:59.4px;top:239.1px"><b><u>52</u></b></div>
<div class="ml" style="left:84.4px;top:215px"><b><u>132</u></b></div>
<div class="ml" style="left:72px;top:171px"><b><u>N/A</u></b></div>
<div class="ml" style="left:104.3px;top:165.3px"><b><u>192</u></b></div>
<div class="ml" style="left:142.1px;top:203.2px"><b><u>88</u></b></div>
<div class="ml" style="left:145.6px;top:200.1px"><b><u>118</u></b></div>
<div class="ml" style="left:112px;top:202.3px"><b><u>N/A</u></b></div>
<div class="ml" style="left:118.6px;top:183.6px"><b><u>156</u></b></div>
<div class="ml" style="left:127.8px;top:196.5px"><b><u>157</u></b></div>
<div class="ml" style="left:157.5px;top:143.6px"><b><u>95</u></b></div>
<div class="ml" style="left:198.8px;top:126.9px"><b><u>77</u></b></div>
<div class="ml" style="left:196.9px;top:140.8px"><b><u>104</u></b></div>
<div class="ml" style="left:218.6px;top:120.2px"><b><u>317</u></b></div>
<div class="ml" style="left:228.4px;top:117.8px"><b><u>185</u></b></div>
<div class="ml" style="left:198.1px;top:159.8px"><b><u>95</u></b></div>
<div class="ml" style="left:206.8px;top:162.3px"><b><u>175</u></b></div>
<div class="ml" style="left:214px;top:162.7px"><b><u>126</u></b></div>
<div class="ml" style="left:218px;top:173.3px"><b><u>180</u></b></div>
<div class="ml" style="left:228.5px;top:185.8px"><b><u>225</u></b></div>
<div class="ml" style="left:259.8px;top:189.7px"><b><u>N/A</u></b></div>
<div class="ml" style="left:190.6px;top:201.2px"><b><u>157</u></b></div>
<div class="ml" style="left:212.8px;top:225.3px"><b><u>161</u></b></div>
<div class="ml" style="left:233.7px;top:232.9px"><b><u>N/A</u></b></div>
<div class="ml" style="left:240.8px;top:250.5px"><b><u>161</u></b></div>
<div class="ml" style="left:271.5px;top:210.8px"><b><u>174</u></b></div>
<div class="ml" style="left:279px;top:205.8px"><b><u>232</u></b></div>
<div class="ml" style="left:301px;top:234px"><b><u>96</u></b></div>
<div class="ml" style="left:326px;top:229.5px"><b><u>101</u></b></div>
<div class="ml" style="left:338px;top:217.3px"><b><u>129</u></b></div>
<div class="ml" style="left:341px;top:258.2px"><b><u>35</u></b></div>
<div class="ml" style="left:366px;top:208.5px"><b><u>81</u></b></div>
<div class="ml" style="left:397px;top:174.5px"><b><u>110</u></b></div>
<div class="ml" style="left:378.3px;top:133.7px"><b><u>34</u></b></div>
<div class="ml" style="left:405.1px;top:124.8px"><b><u>63</u></b></div>
<div class="ml" style="left:342.3px;top:92.3px"><b><u>335</u></b></div>
<div class="abs pop"><div style="padding-top:10.5px">Bishkek<br>2021-01-28 7:00 PM<br>(LT)</div><table class="pt"><tr><th style="width:55.5px">Pollutant</th><th>AQI</th></tr><tr><td>PM2.5</td><td class="v">317</td></tr></table></div>
<div class="abs tip"><i></i></div>
</div>
<div class="abs ph" style="top:3px">Select a City</div>
<div class="abs sel" style="top:27px">Bishkek<span class="x">×</span><span class="a"></span></div>
<div class="abs ph" style="top:66px">Select a Parameter</div>
<div class="abs sel" style="top:90px">PM2.5<span class="x">×</span><span class="a"></span></div>
<div class="abs rss"><span>Bishkek</span><svg class="abs" style="left:191.6px;top:16.6px" width="23" height="23" viewBox="0 0 23 23">
<rect width="23" height="23" fill="#f2b340"/>
<circle cx="5.6" cy="17.6" r="2.4" fill="#fff"/>
<path d="M3.2 9.3 a10.6 10.6 0 0 1 10.6 10.6" fill="none" stroke="#fff" stroke-width="3"/>
<path d="M3.2 3.6 a16.3 16.3 0 0 1 16.3 16.3" fill="none" stroke="#fff" stroke-width="3"/>
</svg></div>
<div class="abs note">Note: Values above 500 are considered Beyond the AQI. Follow<br>recommendations for the Hazardous category. Additional information<br>on reducing exposure to extremely high levels of particle pollution is<br>available <b>here</b>.</div>
<div class="abs tab on" style="left:15px;width:72px">AQI</div>
<div class="abs tab" style="left:89px;width:111px">Concentration</div>
<div class="abs tab" style="left:202.3px;width:92px">Historical</div>
<div class="abs tabline"></div>
<div class="abs learn">Learn more about how the Air Quality Index [AQI] is calculated from the EPA <b>here</b>.</div>
<svg width="534" height="212" viewBox="0 0 534 212" style="position:absolute;left:15px;top:369px;background:#fff" font-family="'DejaVu Sans','Liberation Sans',sans-serif">
<line x1="50.5" x2="527" y1="138.5" y2="138.5" stroke="#e8e8e8" stroke-width="1"/>
<line x1="50.5" x2="527" y1="114" y2="114" stroke="#e8e8e8" stroke-width="1"/>
<line x1="50.5" x2="527" y1="89.5" y2="89.5" stroke="#e8e8e8" stroke-width="1"/>
<line x1="50.5" x2="527" y1="65" y2="65" stroke="#e8e8e8" stroke-width="1"/>
<line x1="50.5" x2="527" y1="40.5" y2="40.5" stroke="#e8e8e8" stroke-width="1"/>
<text x="40.2" y="165.4" font-size="6.8" text-anchor="end" fill="#111" stroke="#111" stroke-width=".15">0</text>
<text x="40.2" y="140.9" font-size="6.8" text-anchor="end" fill="#111" stroke="#111" stroke-width=".15">100</text>
<text x="40.2" y="116.4" font-size="6.8" text-anchor="end" fill="#111" stroke="#111" stroke-width=".15">200</text>
<text x="40.2" y="91.9" font-size="6.8" text-anchor="end" fill="#111" stroke="#111" stroke-width=".15">300</text>
<text x="40.2" y="67.4" font-size="6.8" text-anchor="end" fill="#111" stroke="#111" stroke-width=".15">400</text>
<text x="40.2" y="42.9" font-size="6.8" text-anchor="end" fill="#111" stroke="#111" stroke-width=".15">500</text>
<line x1="50.5" x2="527" y1="163" y2="163" stroke="#c0d0e0" stroke-width="1"/>
<line x1="50.5" x2="50.5" y1="163" y2="169.8" stroke="#c0d0e0" stroke-width="1"/>
<line x1="70.3542" x2="70.3542" y1="163" y2="169.8" stroke="#c0d0e0" stroke-width="1"/>
<line x1="90.2083" x2="90.2083" y1="163" y2="169.8" stroke="#c0d0e0" stroke-width="1"/>
<line x1="110.062" x2="110.062" y1="163" y2="169.8" stroke="#c0d0e0" stroke-width="1"/>
<line x1="129.917" x2="129.917" y1="163" y2="169.8" stroke="#c0d0e0" stroke-width="1"/>
<line x1="149.771" x2="149.771" y1="163" y2="169.8" stroke="#c0d0e0" stroke-width="1"/>
<line x1="169.625" x2="169.625" y1="163" y2="169.8" stroke="#c0d0e0" stroke-width="1"/>
<line x1="189.479" x2="189.479" y1="163" y2="169.8" stroke="#c0d0e0" stroke-width="1"/>
<line x1="209.333" x2="209.333" y1="163" y2="169.8" stroke="#c0d0e0" stroke-width="1"/>
<line x1="229.188" x2="229.188" y1="163" y2="169.8" stroke="#c0d0e0" stroke-width="1"/>
<line x1="249.042" x2="249.042" y1="163" y2="169.8" stroke="#c0d0e0" stroke-width="1"/>
<line x1="268.896" x2="268.896" y1="163" y2="169.8" stroke="#c0d0e0" stroke-width="1"/>
<line x1="288.75" x2="288.75" y1="163" y2="169.8" stroke="#c0d0e0" stroke-width="1"/>
<line x1="308.604" x2="308.604" y1="163" y2="169.8" stroke="#c0d0e0" stroke-width="1"/>
<line x1="328.458" x2="328.458" y1="163" y2="169.8" stroke="#c0d0e0" stroke-width="1"/>
<line x1="348.312" x2="348.312" y1="163" y2="169.8" stroke="#c0d0e0" stroke-width="1"/>
<line x1="368.167" x2="368.167" y1="163" y2="169.8" stroke="#c0d0e0" stroke-width="1"/>
<line x1="388.021" x2="388.021" y1="163" y2="169.8" stroke="#c0d0e0" stroke-width="1"/>
<line x1="407.875" x2="407.875" y1="163" y2="169.8" stroke="#c0d0e0" stroke-width="1"/>
<line x1="427.729" x2="427.729" y1="163" y2="169.8" stroke="#c0d0e0" stroke-width="1"/>
<line x1="447.583" x2="447.583" y1="163" y2="169.8" stroke="#c0d0e0" stroke-width="1"/>
<line x1="467.438" x2="467.438" y1="163" y2="169.8" stroke="#c0d0e0" stroke-width="1"/>
<line x1="487.292" x2="487.292" y1="163" y2="169.8" stroke="#c0d0e0" stroke-width="1"/>
<line x1="507.146" x2="507.146" y1="163" y2="169.8" stroke="#c0d0e0" stroke-width="1"/>
<line x1="527" x2="527" y1="163" y2="169.8" stroke="#c0d0e0" stroke-width="1"/>
<rect x="55.2271" y="63.7585" width="10.7" height="99.6415" fill="#4c0026" stroke="#30303a" stroke-opacity=".6" stroke-width=".7"/>
<rect x="75.0813" y="60.99" width="10.7" height="102.41" fill="#4c0026" stroke="#30303a" stroke-opacity=".6" stroke-width=".7"/>
<rect x="94.9354" y="65.008" width="10.7" height="98.392" fill="#4c0026" stroke="#30303a" stroke-opacity=".6" stroke-width=".7"/>
<rect x="114.79" y="73.9995" width="10.7" height="89.4005" fill="#4c0026" stroke="#30303a" stroke-opacity=".6" stroke-width=".7"/>
<rect x="134.644" y="86.0045" width="10.7" height="77.3955" fill="#4c0026" stroke="#30303a" stroke-opacity=".6" stroke-width=".7"/>
<rect x="154.498" y="107.246" width="10.7" height="56.154" fill="#99004c" stroke="#30303a" stroke-opacity=".6" stroke-width=".7"/>
<rect x="174.352" y="108.005" width="10.7" height="55.3945" fill="#99004c" stroke="#30303a" stroke-opacity=".6" stroke-width=".7"/>
<rect x="194.206" y="115.38" width="10.7" height="48.02" fill="#ff0000" stroke="#30303a" stroke-opacity=".6" stroke-width=".7"/>
<rect x="214.06" y="119.545" width="10.7" height="43.855" fill="#ff0000" stroke="#30303a" stroke-opacity=".6" stroke-width=".7"/>
<rect x="233.915" y="110.063" width="10.7" height="53.3365" fill="#99004c" stroke="#30303a" stroke-opacity=".6" stroke-width=".7"/>
<rect x="253.769" y="118.981" width="10.7" height="44.4185" fill="#ff0000" stroke="#30303a" stroke-opacity=".6" stroke-width=".7"/>
<rect x="273.623" y="122.093" width="10.7" height="41.307" fill="#ff0000" stroke="#30303a" stroke-opacity=".6" stroke-width=".7"/>
<rect x="293.477" y="122.093" width="10.7" height="41.307" fill="#ff0000" stroke="#30303a" stroke-opacity=".6" stroke-width=".7"/>
<rect x="313.331" y="124.812" width="10.7" height="38.5875" fill="#ff0000" stroke="#30303a" stroke-opacity=".6" stroke-width=".7"/>
<rect x="333.185" y="126.38" width="10.7" height="37.0195" fill="#ff0000" stroke="#30303a" stroke-opacity=".6" stroke-width=".7"/>
<rect x="353.04" y="124.812" width="10.7" height="38.5875" fill="#ff0000" stroke="#30303a" stroke-opacity=".6" stroke-width=".7"/>
<rect x="372.894" y="120.917" width="10.7" height="42.483" fill="#ff0000" stroke="#30303a" stroke-opacity=".6" stroke-width=".7"/>
<rect x="392.748" y="77.2825" width="10.7" height="86.1175" fill="#4c0026" stroke="#30303a" stroke-opacity=".6" stroke-width=".7"/>
<rect x="412.602" y="60.9165" width="10.7" height="102.484" fill="#4c0026" stroke="#30303a" stroke-opacity=".6" stroke-width=".7"/>
<rect x="432.456" y="56.629" width="10.7" height="106.771" fill="#4c0026" stroke="#30303a" stroke-opacity=".6" stroke-width=".7"/>
<rect x="452.31" y="64.028" width="10.7" height="99.372" fill="#4c0026" stroke="#30303a" stroke-opacity=".6" stroke-width=".7"/>
<rect x="472.165" y="71.427" width="10.7" height="91.973" fill="#4c0026" stroke="#30303a" stroke-opacity=".6" stroke-width=".7"/>
<rect x="492.019" y="77.2825" width="10.7" height="86.1175" fill="#4c0026" stroke="#30303a" stroke-opacity=".6" stroke-width=".7"/>
<rect x="511.873" y="85.245" width="10.7" height="78.155" fill="#4c0026" stroke="#30303a" stroke-opacity=".6" stroke-width=".7"/>
<text transform="translate(62.3271,174.7) rotate(-45)" font-size="7" text-anchor="end" fill="#666">8 PM</text>
<text transform="translate(82.1813,174.7) rotate(-45)" font-size="7" text-anchor="end" fill="#666">9 PM</text>
<text transform="translate(102.035,174.7) rotate(-45)" font-size="7" text-anchor="end" fill="#666">10 PM</text>
<text transform="translate(121.89,174.7) rotate(-45)" font-size="7" text-anchor="end" fill="#666">11 PM</text>
<text transform="translate(141.744,174.7) rotate(-45)" font-size="7" text-anchor="end" fill="#666">Jan 28, 2021 12 AM</text>
<text transform="translate(161.598,174.7) rotate(-45)" font-size="7" text-anchor="end" fill="#666">1 AM</text>
<text transform="translate(181.452,174.7) rotate(-45)" font-size="7" text-anchor="end" fill="#666">2 AM</text>
<text transform="translate(201.306,174.7) rotate(-45)" font-size="7" text-anchor="end" fill="#666">3 AM</text>
<text transform="translate(221.16,174.7) rotate(-45)" font-size="7" text-anchor="end" fill="#666">4 AM</text>
<text transform="translate(241.015,174.7) rotate(-45)" font-size="7" text-anchor="end" fill="#666">5 AM</text>
<text transform="translate(260.869,174.7) rotate(-45)" font-size="7" text-anchor="end" fill="#666">6 AM</text>
<text transform="translate(280.723,174.7) rotate(-45)" font-size="7" text-anchor="end" fill="#666">7 AM</text>
<text transform="translate(300.577,174.7) rotate(-45)" font-size="7" text-anchor="end" fill="#666">8 AM</text>
<text transform="translate(320.431,174.7) rotate(-45)" font-size="7" text-anchor="end" fill="#666">9 AM</text>
<text transform="translate(340.285,174.7) rotate(-45)" font-size="7" text-anchor="end" fill="#666">10 AM</text>
<text transform="translate(360.14,174.7) rotate(-45)" font-size="7" text-anchor="end" fill="#666">11 AM</text>
<text transform="translate(379.994,174.7) rotate(-45)" font-size="7" text-anchor="end" fill="#666">12 PM</text>
<text transform="translate(399.848,174.7) rotate(-45)" font-size="7" text-anchor="end" fill="#666">1 PM</text>
<text transform="translate(419.702,174.7) rotate(-45)" font-size="7" text-anchor="end" fill="#666">2 PM</text>
<text transform="translate(439.556,174.7) rotate(-45)" font-size="7" text-anchor="end" fill="#666">3 PM</text>
<text transform="translate(459.41,174.7) rotate(-45)" font-size="7" text-anchor="end" fill="#666">4 PM</text>
<text transform="translate(479.265,174.7) rotate(-45)" font-size="7" text-anchor="end" fill="#666">5 PM</text>
<text transform="translate(499.119,174.7) rotate(-45)" font-size="7" text-anchor="end" fill="#666">6 PM</text>
<text transform="translate(518.973,174.7) rotate(-45)" font-size="7" text-anchor="end" fill="#666">7 PM</text>
<text x="267" y="16" font-size="11.6" letter-spacing=".08" text-anchor="middle" fill="#333">Bishkek – PM2.5</text>
<text transform="translate(19,102) rotate(-90)" font-size="7.3" text-anchor="middle" fill="#333">AQI</text>
</svg>
<div class="abs cc"><div class="cc1">Current Conditions<small>observed at</small>Jan 28, 2021 7:00 PM (LT)</div><div class="cc2">317 AQI<br>Hazardous<br>PM2.5</div><div class="cc3"><h6>Health Message</h6><p>AQI values over 300 trigger health warnings<br>of emergency conditions. The entire<br>population is even more likely to be affected<br>by serious health effects.</p></div></div>
</body></html>
